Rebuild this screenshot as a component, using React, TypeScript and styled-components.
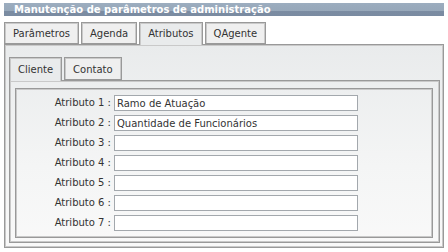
import { FC, Fragment } from 'react';
import styled, { createGlobalStyle } from 'styled-components';

const GlobalStyle = createGlobalStyle`
  html, body {
    margin: 0;
    padding: 0;
    background: #ffffff;
  }
  * {
    box-sizing: border-box;
  }
`;

const Window = styled.div`
  width: 440px;
  margin: 3px 0 0 4px;
  font-family: 'DejaVu Sans', Verdana, sans-serif;
  font-size: 10px;
  color: #333333;
`;

const TitleBar = styled.div`
  height: 13px;
  padding-left: 10px;
  background: linear-gradient(to bottom, #9cadbf 0%, #97a8ba 62%, #7b8ca2 64%, #7a8ba1 100%);
  color: #ffffff;
  font-weight: bold;
  font-size: 10px;
  line-height: 13px;
  white-space: nowrap;
`;

const TabList = styled.div<{ $top: number }>`
  display: flex;
  gap: 2px;
  margin-top: ${(p) => p.$top}px;
  position: relative;
  z-index: 1;
`;

const Tab = styled.div<{ $active?: boolean; $height: number }>`
  height: ${(p) => p.$height + (p.$active ? 1 : 0)}px;
  padding: 1px 8px 0;
  border: 1px solid #999999;
  border-bottom: ${(p) => (p.$active ? 'none' : '1px solid #999999')};
  box-shadow: inset 1px 1px 0 #c9c9c9, inset -1px 0 0 #c9c9c9;
  background: ${(p) => (p.$active ? '#e9ebec' : '#efefef')};
  line-height: ${(p) => p.$height - 2}px;
  white-space: nowrap;
  cursor: pointer;
  margin-bottom: ${(p) => (p.$active ? -1 : 0)}px;
`;

const Panel = styled.div`
  height: 204px;
  border: 1px solid #999999;
  box-shadow: inset 1px 1px 0 #c9c9c9, inset -1px -1px 0 #c9c9c9;
  background: linear-gradient(to bottom, #e9ebec 0%, #f4f5f5 60%, #f9f9f9 100%);
  padding: 0 3px 0 4px;
  display: flex;
  flex-direction: column;
`;

const SubPanel = styled.div`
  height: 163px;
  border: 1px solid #999999;
  box-shadow: inset 1px 1px 0 #c9c9c9, inset -1px -1px 0 #c9c9c9;
  padding: 7px 6px 4px 5px;
  display: flex;
`;

const FieldBox = styled.div`
  flex: 1;
  border: 1px solid #999999;
  box-shadow: inset 1px 1px 0 #c9c9c9, inset -1px -1px 0 #c9c9c9;
  padding: 6px 0 0 0;
  display: grid;
  grid-template-columns: 95px 244px;
  grid-auto-rows: 16px;
  row-gap: 4px;
  column-gap: 3px;
  align-content: start;
`;

const Label = styled.label`
  text-align: right;
  line-height: 16px;
  white-space: nowrap;
  color: #333333;
`;

const TextField = styled.input`
  height: 16px;
  width: 244px;
  margin: 0;
  padding: 0 0 0 2px;
  border: 1px solid #a3a8ad;
  background: #ffffff;
  font-family: 'DejaVu Sans', Verdana, sans-serif;
  font-size: 10px;
  color: #333333;
  outline: none;
`;

const mainTabs = ['Parâmetros', 'Agenda', 'Atributos', 'QAgente'];
const subTabs = ['Cliente', 'Contato'];
const values = ['Ramo de Atuação', 'Quantidade de Funcionários', '', '', '', '', ''];

const App: FC = () => {
  return (
    <>
      <GlobalStyle />
      <Window>
        <TitleBar>Manutenção de parâmetros de administração</TitleBar>
        <TabList $top={6}>
          {mainTabs.map((t) => (
            <Tab key={t} $height={22} $active={t === 'Atributos'}>
              {t}
            </Tab>
          ))}
        </TabList>
        <Panel>
          <TabList $top={12}>
            {subTabs.map((t) => (
              <Tab key={t} $height={23} $active={t === 'Cliente'}>
                {t}
              </Tab>
            ))}
          </TabList>
          <SubPanel>
            <FieldBox>
              {values.map((v, i) => (
                <Fragment key={i}>
                  <Label>Atributo {i + 1} :</Label>
                  <TextField defaultValue={v} />
                </Fragment>
              ))}
            </FieldBox>
          </SubPanel>
        </Panel>
      </Window>
    </>
  );
};

export default App;
